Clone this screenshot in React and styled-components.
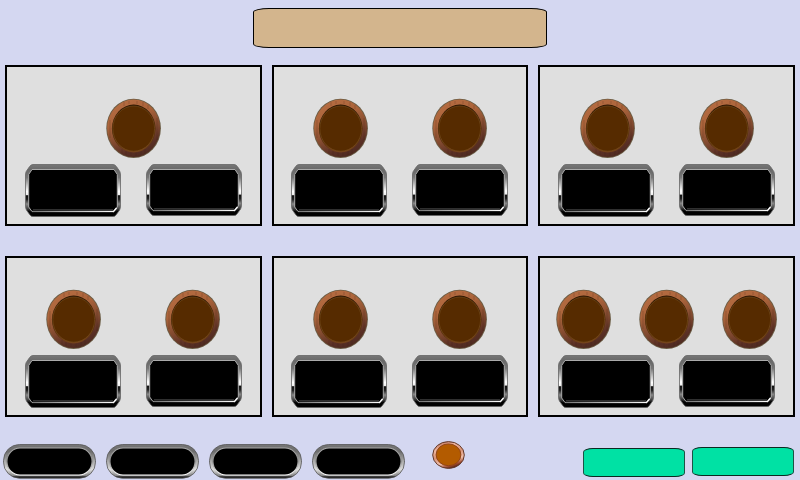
import React, { useId } from "react";
import styled, { createGlobalStyle } from "styled-components";

const GlobalStyle = createGlobalStyle`
  *, *::before, *::after { box-sizing: border-box; }
  body {
    margin: 0;
    background: #d4d7f1;
    font-family: "Liberation Sans", Arial, sans-serif;
  }
`;

const Page = styled.div`
  display: flex;
  flex-direction: column;
  min-height: 100vh;
`;

const Banner = styled.header`
  align-self: center;
  width: 36%;
  min-width: 294px;
  height: 40px;
  margin-top: 8px;
  background: #d3b58d;
  border: 1px solid #000;
  border-radius: 16px / 4px;
`;

const PanelGrid = styled.main`
  display: grid;
  grid-template-columns: repeat(3, 1fr);
  gap: 30px 10px;
  padding: 17px 5px 0;
`;

const Panel = styled.section`
  display: flex;
  flex-direction: column;
  gap: 6px;
  padding: 31px 0 7px;
  background: #dfdfdf;
  border: 2px solid #000;
`;

const LampRow = styled.div`
  display: flex;
  justify-content: center;
  gap: ${({ $count }) => ($count > 2 ? "28px" : "64px")};
`;

const KeyRow = styled.div`
  display: flex;
  justify-content: center;
  align-items: flex-start;
  gap: 25px;
`;

const PlainButton = styled.button`
  display: block;
  padding: 0;
  border: 0;
  background: none;
  cursor: pointer;

  svg { display: block; }
`;

const Footer = styled.footer`
  display: flex;
  justify-content: space-between;
  align-items: flex-start;
  padding: 24px 6px 1px 3px;
`;

const FooterGroup = styled.div`
  display: flex;
  align-items: flex-start;
  gap: ${({ $gap }) => $gap};
`;

const PillGroup = styled(FooterGroup)`
  padding-top: 3px;
`;

const ActionGroup = styled(FooterGroup)`
  height: 30px;
  margin-top: 6px;
`;

const ActionButton = styled.button`
  width: 102px;
  height: 29px;
  padding: 0;
  background: #00e1a4;
  border: 1px solid #1c5446;
  border-top-color: #0b2a22;
  border-bottom-color: #0b2a22;
  border-radius: 10px / 4px;
  cursor: pointer;

  &:first-child { align-self: flex-end; }
`;

function WoodLamp({ label }) {
  const id = useId();
  return (
    <PlainButton type="button" aria-label={label}>
      <svg width="55" height="60" viewBox="0 0 55 60" aria-hidden="true">
        <defs>
          <linearGradient id={id + "w"} x1="0.3" y1="0" x2="0.7" y2="1">
            <stop offset="0" stopColor="#b56c41" />
            <stop offset="0.3" stopColor="#ab643b" />
            <stop offset="0.6" stopColor="#80492f" />
            <stop offset="0.82" stopColor="#5a3025" />
            <stop offset="1" stopColor="#4c2920" />
          </linearGradient>
          <linearGradient id={id + "r"} x1="0.4" y1="0" x2="0.5" y2="1">
            <stop offset="0" stopColor="#2e1600" />
            <stop offset="0.6" stopColor="#4a2606" />
            <stop offset="1" stopColor="#74401a" />
          </linearGradient>
        </defs>
        <ellipse cx="27.6" cy="30.3" rx="27.3" ry="29.6" fill="#6a5c44" />
        <ellipse cx="27.6" cy="30.3" rx="26.5" ry="28.8" fill={`url(#${id}w)`} />
        <g stroke="#3a1c12" strokeWidth="1" opacity="0.22">
          <path d="M18 4V8M23 3V6M31 3V6M37 4V8M42 7V11M16 51V56M20 53V57M25 54V58M30 54V58M35 53V57M39 51V56M4 22V40M51 20V42" />
        </g>
        <ellipse cx="27.7" cy="30.6" rx="21.8" ry="24" fill={`url(#${id}r)`} />
        <ellipse cx="27.7" cy="30.6" rx="20.9" ry="22.6" fill="#562b00" stroke="#7a5320" strokeWidth="0.6" />
      </svg>
    </PlainButton>
  );
}

function BevelKey({ label, height }) {
  const id = useId();
  const h = height;
  return (
    <PlainButton type="button" aria-label={label}>
      <svg width="96" height={h} viewBox={`0 0 96 ${h}`} aria-hidden="true">
        <defs>
          <linearGradient id={id + "f"} x1="0" y1="0" x2="0" y2="1">
            <stop offset="0" stopColor="#777" />
            <stop offset="0.1" stopColor="#686868" />
            <stop offset="0.25" stopColor="#777" />
            <stop offset="0.4" stopColor="#c4c4c4" />
            <stop offset="0.52" stopColor="#fff" />
            <stop offset="0.58" stopColor="#eee" />
            <stop offset="0.6" stopColor="#111" />
            <stop offset="0.67" stopColor="#222" />
            <stop offset="0.76" stopColor="#888" />
            <stop offset="0.85" stopColor="#444" />
            <stop offset="0.91" stopColor="#000" />
            <stop offset="1" stopColor="#000" />
          </linearGradient>
          <linearGradient id={id + "l"} x1="0" y1="0" x2="1" y2="0">
            <stop offset="0" stopColor="#777" />
            <stop offset="0.35" stopColor="#aaa" />
            <stop offset="1" stopColor="#fff" />
          </linearGradient>
        </defs>
        <path
          d={`M8 0.5H88Q90 0.5 91.4 2.5L94.8 7.5Q95.5 9 95.5 11V${h - 11}Q95.5 ${h - 9} 94.6 ${h - 7}L91 ${h - 2}Q90 ${h - 0.5} 88 ${h - 0.5}H8Q6 ${h - 0.5} 5 ${h - 2}L1.4 ${h - 7}Q0.5 ${h - 9} 0.5 ${h - 11}V11Q0.5 9 1.2 7.5L4.6 2.5Q6 0.5 8 0.5Z`}
          fill={`url(#${id}f)`}
          stroke="#656565"
          strokeWidth="0.8"
        />
        <path
          d={`M7 5.5H89L92.3 10.5V${h - 10}L88.5 ${h - 5.5}H7L3.7 ${h - 10}V10.5Z`}
          fill="#000"
          stroke="#aaa"
          strokeWidth="1"
        />
        <path d={`M7.5 ${h - 5.5}H88.5L91.5 ${h - 9}`} fill="none" stroke={`url(#${id}l)`} strokeWidth="1.4" />
        <path d={`M8 ${h - 7.5}H88`} stroke="#444" strokeWidth="0.7" />
        <path d={`M8 ${h - 3}H88`} stroke="#000" strokeWidth="3" />
      </svg>
    </PlainButton>
  );
}

function PillKey({ label }) {
  const id = useId();
  return (
    <PlainButton type="button" aria-label={label}>
      <svg width="93" height="35" viewBox="0 0 93 35" aria-hidden="true">
        <defs>
          <linearGradient id={id + "f"} x1="0" y1="0" x2="0" y2="1">
            <stop offset="0" stopColor="#777" />
            <stop offset="0.2" stopColor="#6c6c6c" />
            <stop offset="0.5" stopColor="#aaa" />
            <stop offset="0.75" stopColor="#ddd" />
            <stop offset="0.92" stopColor="#888" />
            <stop offset="0.96" stopColor="#222" />
            <stop offset="1" stopColor="#111" />
          </linearGradient>
          <linearGradient id={id + "r"} x1="0" y1="0" x2="0" y2="1">
            <stop offset="0" stopColor="#aaa" />
            <stop offset="0.5" stopColor="#888" />
            <stop offset="1" stopColor="#fff" />
          </linearGradient>
        </defs>
        <rect x="0.5" y="0.5" width="92" height="33.7" rx="16" fill={`url(#${id}f)`} stroke="#555" strokeWidth="0.8" />
        <rect x="4" y="4" width="85" height="27" rx="13" fill="#000" stroke={`url(#${id}r)`} strokeWidth="1.2" />
      </svg>
    </PlainButton>
  );
}

function CopperLamp({ label }) {
  const id = useId();
  return (
    <PlainButton type="button" aria-label={label}>
      <svg width="33" height="28" viewBox="0 0 33 28" aria-hidden="true">
        <defs>
          <linearGradient id={id + "c"} x1="0.2" y1="0" x2="0.6" y2="1">
            <stop offset="0" stopColor="#b4674c" />
            <stop offset="0.25" stopColor="#efb6a0" />
            <stop offset="0.5" stopColor="#d99376" />
            <stop offset="0.75" stopColor="#efc0ae" />
            <stop offset="0.9" stopColor="#a04a2e" />
            <stop offset="1" stopColor="#50200f" />
          </linearGradient>
        </defs>
        <ellipse cx="16.5" cy="14" rx="15.8" ry="13.4" fill={`url(#${id}c)`} stroke="#60382b" strokeWidth="1" />
        <ellipse cx="16.5" cy="13.8" rx="12.4" ry="10.9" fill="#b35b00" stroke="#8c3f15" strokeWidth="0.9" />
      </svg>
    </PlainButton>
  );
}

const panels = [
  { name: "Panel 1", lamps: 1 },
  { name: "Panel 2", lamps: 2 },
  { name: "Panel 3", lamps: 2 },
  { name: "Panel 4", lamps: 2 },
  { name: "Panel 5", lamps: 2 },
  { name: "Panel 6", lamps: 3 },
];

const range = (n) => Array.from({ length: n }, (_, i) => i + 1);

export default function App() {
  return (
    <Page>
      <GlobalStyle />
      <Banner />
      <PanelGrid>
        {panels.map(({ name, lamps }) => (
          <Panel key={name} aria-label={name}>
            <LampRow $count={lamps}>
              {range(lamps).map((n) => (
                <WoodLamp key={n} label={`${name} lamp ${n}`} />
              ))}
            </LampRow>
            <KeyRow>
              <BevelKey label={`${name} left key`} height={53} />
              <BevelKey label={`${name} right key`} height={52} />
            </KeyRow>
          </Panel>
        ))}
      </PanelGrid>
      <Footer>
        <FooterGroup $gap="27px">
          <PillGroup $gap="10px">
            {range(4).map((n) => (
              <PillKey key={n} label={`Key ${n}`} />
            ))}
          </PillGroup>
          <CopperLamp label="Status lamp" />
        </FooterGroup>
        <ActionGroup $gap="7px">
          <ActionButton type="button" aria-label="Action 1" />
          <ActionButton type="button" aria-label="Action 2" />
        </ActionGroup>
      </Footer>
    </Page>
  );
}
